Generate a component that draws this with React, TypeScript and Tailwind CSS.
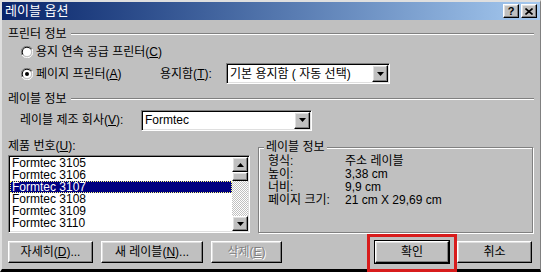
import type { ReactNode } from "react";

const font = { fontFamily: '"Liberation Sans", "Noto Sans CJK KR", sans-serif' };

const raised =
  "border border-t-white border-l-white border-r-black border-b-black shadow-[inset_-1px_-1px_0_#808080,inset_1px_1px_0_#dfdfdf]";
const sunken =
  "border border-t-[#808080] border-l-[#808080] border-r-white border-b-white shadow-[inset_1px_1px_0_#000,inset_-1px_-1px_0_#dfdfdf]";

function U({ children }: { children: ReactNode }) {
  return <span className="underline underline-offset-[1px]">{children}</span>;
}

function Arrow({ down = true }: { down?: boolean }) {
  return (
    <svg width="7" height="4" viewBox="0 0 7 4">
      {down ? <path d="M0 0h7L3.5 4z" fill="#000" /> : <path d="M0 4h7L3.5 0z" fill="#000" />}
    </svg>
  );
}

function Radio({ checked }: { checked?: boolean }) {
  return (
    <svg width="12" height="12" viewBox="0 0 12 12" className="shrink-0">
      <path d="M11 3 A5.5 5.5 0 0 0 3 1 A5.5 5.5 0 0 0 1 9" stroke="#808080" fill="none" />
      <path d="M10 3.5 A4.5 4.5 0 0 0 3.5 2 A4.5 4.5 0 0 0 2 8.5" stroke="#000" fill="none" />
      <circle cx="6" cy="6" r="4" fill="#fff" />
      <path d="M1 9 A5.5 5.5 0 0 0 11 3" stroke="#fff" fill="none" />
      {checked && <circle cx="6" cy="6" r="2" fill="#000" />}
    </svg>
  );
}

function Section({ title }: { title: string }) {
  return (
    <div className="flex h-[14px] items-center gap-[4px]">
      <span className="leading-[14px]">{title}</span>
      <div className="flex-1 border-t border-t-[#808080] border-b border-b-white" />
    </div>
  );
}

function Select({ value, width }: { value: string; width: string }) {
  return (
    <div className={`flex h-[21px] items-center bg-white ${sunken} ${width}`}>
      <span className="flex-1 pl-[3px] leading-[14px]">{value}</span>
      <div className={`mr-[1px] flex h-[17px] w-[16px] items-center justify-center bg-[#c0c0c0] ${raised}`}>
        <Arrow />
      </div>
    </div>
  );
}

function Btn({ label, width, disabled }: { label: ReactNode; width: string; disabled?: boolean }) {
  return (
    <div
      className={`flex h-[22px] items-center justify-center bg-[#c0c0c0] ${raised} ${width} ${
        disabled ? "text-[#808080] [text-shadow:1px_1px_0_#fff]" : ""
      }`}
    >
      {label}
    </div>
  );
}

const items = ["3105", "3106", "3107", "3108", "3109", "3110"];

const info = [
  ["형식:", "주소 레이블"],
  ["높이:", "3,38 cm"],
  ["너비:", "9,9 cm"],
  ["페이지 크기:", "21 cm X 29,69 cm"],
];

export default function App() {
  return (
    <div
      className="flex h-[272px] w-[541px] flex-col border-t-2 border-l-2 border-r border-b-[3px] border-t-[#dfdfdf] border-l-[#dfdfdf] border-r-[#808080] border-b-black bg-[#c0c0c0] text-[12px] text-black"
      style={font}
    >
      <div className="flex h-[18px] shrink-0 items-center bg-gradient-to-r from-[#0a246a] to-[#a6caf0] pl-[3px] pr-[3px]">
        <span className="flex-1 text-[13px] leading-[14px] text-white">레이블 옵션</span>
        <div className={`mr-[2px] flex h-[14px] w-[16px] items-center justify-center bg-[#c0c0c0] text-[11px] font-bold leading-none ${raised}`}>
          ?
        </div>
        <div className={`flex h-[14px] w-[16px] items-center justify-center bg-[#c0c0c0] ${raised}`}>
          <svg width="8" height="7" viewBox="0 0 8 7">
            <path d="M0.5 0.5 7.5 6.5 M7.5 0.5 0.5 6.5" stroke="#000" strokeWidth="1.6" />
          </svg>
        </div>
      </div>

      <div className="relative flex flex-1 flex-col pl-[6px] pr-[6px]">
        <div className="mt-[7px]">
          <Section title="프린터 정보" />
        </div>

        <div className="mt-[3px] flex h-[16px] items-center gap-[3px] pl-[13px]">
          <Radio />
          <span className="leading-[14px]">
            용지 연속 공급 프린터(<U>C</U>)
          </span>
        </div>

        <div className="mt-[3px] flex h-[21px] items-center pl-[13px]">
          <Radio checked />
          <span className="ml-[3px] w-[124px] leading-[14px]">
            페이지 프린터(<U>A</U>)
          </span>
          <span className="w-[66px] leading-[14px]">
            용지함(<U>T</U>):
          </span>
          <Select value="기본 용지함 ( 자동 선택)" width="w-[164px]" />
        </div>

        <div className="mt-[8px]">
          <Section title="레이블 정보" />
        </div>

        <div className="mt-[3px] flex h-[22px] items-center pl-[12px]">
          <span className="w-[121px] leading-[14px]">
            레이블 제조 회사(<U>V</U>):
          </span>
          <Select value="Formtec" width="w-[171px]" />
        </div>

        <div className="mt-[8px] flex h-[94px]">
          <div className="flex w-[242px] flex-col">
            <span className="h-[16px] leading-[14px]">
              제품 번호(<U>U</U>):
            </span>
            <div className={`flex flex-1 bg-white ${sunken}`}>
              <div className="flex flex-1 flex-col pl-[1px] pt-[1px] text-[12px]">
                {items.map(n => (
                  <div
                    key={n}
                    className={`h-[12px] pl-[2px] leading-[12px] ${
                      n === "3107"
                        ? "bg-[#000080] text-white outline outline-1 outline-dotted -outline-offset-1 outline-[#ffff80]"
                        : ""
                    }`}
                  >
                    Formtec {n}
                  </div>
                ))}
              </div>
              <div className="my-[1px] mr-[1px] flex w-[16px] flex-col">
                <div className={`flex h-[15px] items-center justify-center bg-[#c0c0c0] ${raised}`}>
                  <Arrow down={false} />
                </div>
                <div className={`h-[9px] bg-[#c0c0c0] ${raised}`} />
                <div className="flex-1 bg-[repeating-conic-gradient(#c0c0c0_0_25%,#ffffff_0_50%)] bg-[length:2px_2px]" />
                <div className={`flex h-[15px] items-center justify-center bg-[#c0c0c0] ${raised}`}>
                  <Arrow />
                </div>
              </div>
            </div>
          </div>

          <div className="relative ml-[8px] mt-[8px] flex w-[275px] flex-col border border-[#808080] pl-[9px] pt-[7px] shadow-[1px_1px_0_#fff,inset_1px_1px_0_#fff]">
            <span className="absolute -top-[8px] left-[5px] bg-[#c0c0c0] px-[2px] leading-[14px]">레이블 정보</span>
            {info.map(([k, v]) => (
              <div key={k} className="flex h-[13px] items-center">
                <span className="w-[77px] leading-[13px]">{k}</span>
                <span className="leading-[13px]">{v}</span>
              </div>
            ))}
          </div>
        </div>

        <div className="mt-[8px] flex h-[22px] items-center">
          <Btn width="w-[85px]" label={<>자세히(<U>D</U>)...</>} />
          <div className="ml-[8px]">
            <Btn width="w-[102px]" label={<>새 레이블(<U>N</U>)...</>} />
          </div>
          <div className="ml-[8px]">
            <Btn width="w-[71px]" disabled label={<>삭제(<U>E</U>)</>} />
          </div>
          <div className="relative ml-[92px]">
            <div className="border border-black">
              <Btn width="w-[74px]" label="확인" />
            </div>
            <div className="absolute -left-[7px] -right-[7px] -top-[6px] -bottom-[8px] border-[3px] border-[#d81c1c]" />
          </div>
          <div className="ml-[7px]">
            <Btn width="w-[75px]" label="취소" />
          </div>
        </div>
      </div>
    </div>
  );
}
